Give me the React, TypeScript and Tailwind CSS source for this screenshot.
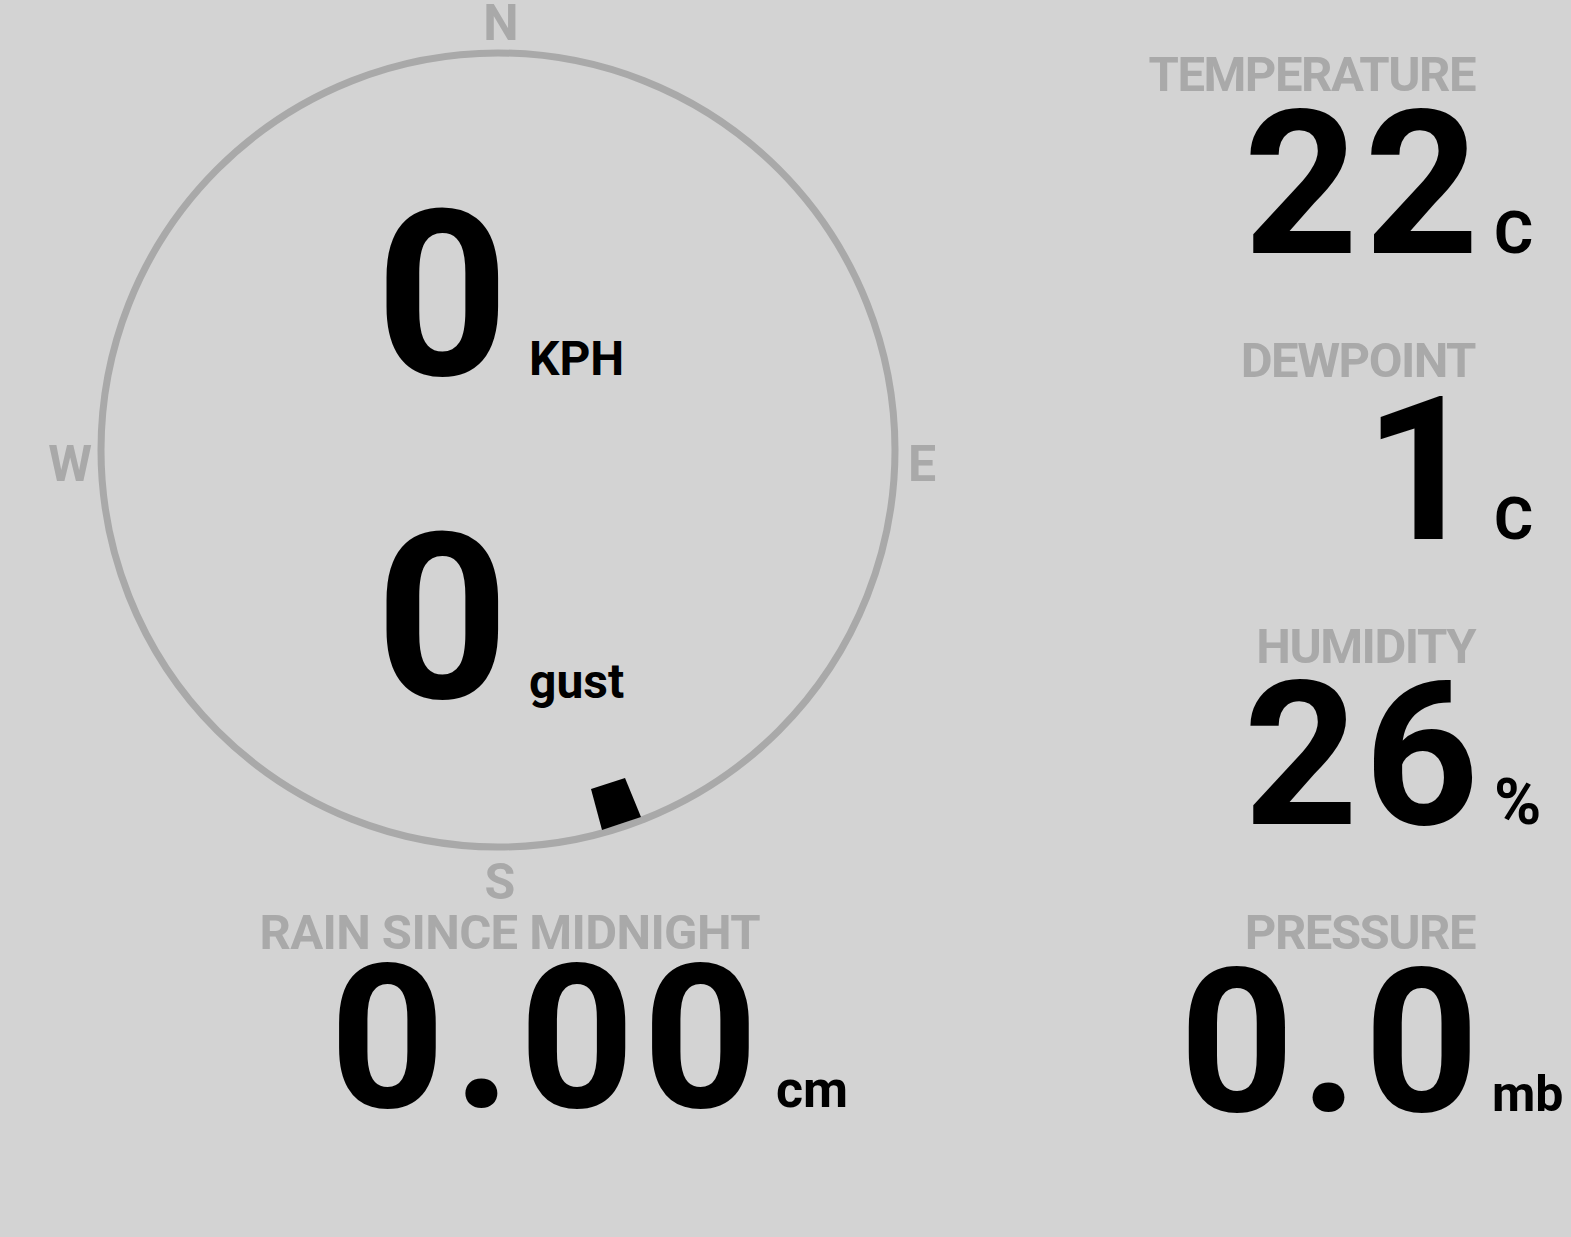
import React from 'react';

interface ReadingProps {
  label: string;
  value: string;
  unit: string;
  unitClass: string;
}

// right-aligned block: label over a big number, unit hangs past the edge
const Reading: React.FC<ReadingProps> = ({ label, value, unit, unitClass }) => (
  <div className="flex flex-col items-end">
    <div className="text-[49px] leading-[0.75] tracking-[-1.5px] text-[#a9a9a9]">{label}</div>
    <div className="mt-[16px] flex items-baseline">
      <span className="-mr-[10px] text-[200px] leading-[0.75] tracking-[6px] text-black">{value}</span>
      <span className={`w-[80px] -mr-[80px] leading-none text-black ${unitClass}`}>{unit}</span>
    </div>
  </div>
);

const Compass: React.FC = () => (
  <>
    <svg className="absolute inset-0" width="1000" height="915" viewBox="0 0 1000 915">
      <circle cx="498" cy="450" r="397" fill="none" stroke="#a9a9a9" strokeWidth="7" />
      <polygon points="591,789 625,778 641,817 602,830" fill="#000" />
    </svg>
    <span className="absolute left-[501px] top-[3px] -translate-x-1/2 text-[50px] leading-[0.8] text-[#a9a9a9]">N</span>
    <span className="absolute left-[70px] top-[444px] -translate-x-1/2 text-[50px] leading-[0.8] text-[#a9a9a9]">W</span>
    <span className="absolute left-[922px] top-[444px] -translate-x-1/2 text-[50px] leading-[0.8] text-[#a9a9a9]">E</span>
    <span className="absolute left-[500px] top-[862px] -translate-x-1/2 text-[50px] leading-[0.8] text-[#a9a9a9]">S</span>
  </>
);

export default function App() {
  return (
    <div className="flex h-[1237px] w-full bg-[#d3d3d3] font-['Roboto','Liberation_Sans',sans-serif] font-bold">
      {/* wind + rain */}
      <div className="flex w-[1000px] flex-col">
        <div className="relative h-[915px]">
          <Compass />
          <div className="relative flex flex-col items-center gap-[149px] pt-[209px]">
            <div className="flex items-baseline">
              <span className="text-[232px] leading-[0.75] text-black">0</span>
              <span className="ml-[20px] text-[48px] leading-none text-black">KPH</span>
            </div>
            <div className="flex items-baseline">
              <span className="text-[232px] leading-[0.75] text-black">0</span>
              <span className="ml-[20px] text-[48px] leading-none text-black">gust</span>
            </div>
          </div>
        </div>
        <div className="flex w-[760px] flex-col items-end">
          <div className="text-[49px] leading-[0.75] tracking-[-0.6px] text-[#a9a9a9]">RAIN SINCE MIDNIGHT</div>
          <div className="mt-[12px] flex items-baseline">
            <span className="-mr-[6px] text-[201px] leading-[0.75] tracking-[8px] text-black">0.00</span>
            <span className="w-[80px] -mr-[80px] pl-[16px] text-[52px] leading-none text-black">cm</span>
          </div>
        </div>
      </div>

      {/* readings */}
      <div className="flex flex-1 flex-col items-end gap-[80px] pr-[96px] pt-[57px]">
        <Reading label="TEMPERATURE" value="22" unit="C" unitClass="pl-[19px] text-[60px]" />
        <Reading label="DEWPOINT" value="1" unit="C" unitClass="pl-[19px] text-[60px]" />
        <Reading label="HUMIDITY" value="26" unit="%" unitClass="pl-[19px] text-[64px]" />
        <Reading label="PRESSURE" value="0.0" unit="mb" unitClass="pl-[17px] text-[50px]" />
      </div>
    </div>
  );
}
